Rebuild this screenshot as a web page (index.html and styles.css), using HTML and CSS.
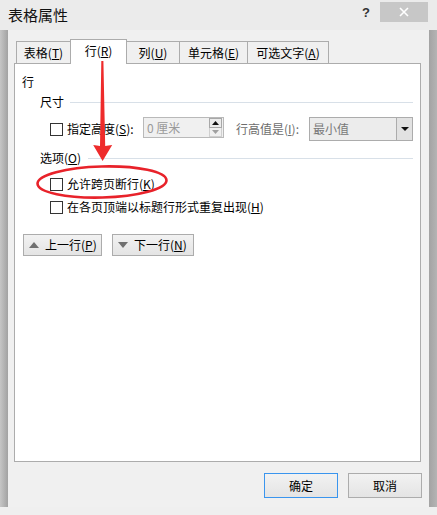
FILE: index.html
```html
<!DOCTYPE html>
<html>
<head>
<meta charset="utf-8">
<link rel="stylesheet" href="styles.css">
</head>
<body>
<div class="titlebar">
  <div class="title">表格属性</div>
  <div class="help">?</div>
  <div class="close"><svg width="12" height="12" viewBox="0 0 12 12"><path d="M2 2L10 10M10 2L2 10" stroke="#fff" stroke-width="1.6"/></svg></div>
</div>
<div class="main">
  <div class="strip-left"></div>
  <div class="dialog">
    <div class="tabs">
      <div class="tab w1">表格(<u>T</u>)</div>
      <div class="tab active w2">行(<u>R</u>)</div>
      <div class="tab w3">列(<u>U</u>)</div>
      <div class="tab w4">单元格(<u>E</u>)</div>
      <div class="tab w5">可选文字(<u>A</u>)</div>
    </div>
    <div class="panel">
      <div class="heading">行</div>
      <div class="group-title"><span>尺寸</span><div class="rule"></div></div>
      <div class="size-row">
        <span class="cb"></span>
        <span class="lbl1">指定高度(<u>S</u>):</span>
        <div class="spin">
          <span class="spin-text">0 厘米</span>
          <div class="spin-btns">
            <div class="sb up"><svg width="7" height="4" viewBox="0 0 7 4"><path d="M0 4L3.5 0L7 4Z" fill="#111"/></svg></div>
            <div class="sb down"><svg width="7" height="4" viewBox="0 0 7 4"><path d="M0 0L3.5 4L7 0Z" fill="#a0a0a0"/></svg></div>
          </div>
        </div>
        <span class="lbl2">行高值是(<u>I</u>):</span>
        <div class="combo">
          <span class="combo-text">最小值</span>
          <div class="drop"><svg width="8" height="4" viewBox="0 0 8 4"><path d="M0 0L4 4L8 0Z" fill="#111"/></svg></div>
        </div>
      </div>
      <div class="group-title opts"><span>选项(<u>O</u>)</span><div class="rule"></div></div>
      <div class="check-row first"><span class="cb"></span><span>允许跨页断行(<u>K</u>)</span></div>
      <div class="check-row second"><span class="cb"></span><span>在各页顶端以标题行形式重复出现(<u>H</u>)</span></div>
      <div class="nav-row">
        <div class="btn nav prev"><svg width="10" height="6" viewBox="0 0 10 6"><path d="M0 6L5 0L10 6Z" fill="#707070"/></svg><span>上一行(<u>P</u>)</span></div>
        <div class="btn nav next"><svg width="10" height="6" viewBox="0 0 10 6"><path d="M0 0L5 6L10 0Z" fill="#707070"/></svg><span>下一行(<u>N</u>)</span></div>
      </div>
    </div>
    <div class="footer">
      <div class="btn foot ok">确定</div>
      <div class="btn foot">取消</div>
    </div>
  </div>
  <div class="strip-right"></div>
</div>
<div class="bottom"></div>
<svg class="annot" width="437" height="515" viewBox="0 0 437 515">
  <path d="M101.3 61 L103.4 61 L105.2 146 Q108 145.5 112.2 145 L102.6 161 L93.2 145 Q97 145.5 100 146 Z" fill="#ee2b2b"/>
  <ellipse cx="102" cy="182" rx="64.5" ry="15.5" fill="none" stroke="#e8222a" stroke-width="2.6" transform="rotate(-1.5 102 182)"/>
</svg>
</body>
</html>
```
FILE: styles.css
```css
* { box-sizing: border-box; }
html, body { margin: 0; padding: 0; }
body {
  width: 437px;
  height: 515px;
  overflow: hidden;
  position: relative;
  background: #efefef;
  font-family: "Noto Sans CJK SC", "Noto Sans", sans-serif;
  font-size: 12px;
  line-height: 16px;
  color: #000;
}
u { text-decoration: underline; text-underline-offset: 1px; }

.titlebar {
  height: 30px;
  display: flex;
  align-items: center;
  background: #ebebeb;
}
.title {
  padding-left: 8px;
  font-size: 15px;
  line-height: 20px;
  color: #111;
}
.help {
  margin-left: auto;
  margin-right: 10px;
  font-family: "Liberation Sans", sans-serif;
  font-weight: bold;
  font-size: 13px;
  color: #333;
  margin-top: -4px;
}
.close {
  align-self: flex-start;
  margin-top: 2px;
  margin-right: 9px;
  width: 48px;
  height: 20px;
  background: #c7c7c7;
  display: flex;
  align-items: center;
  justify-content: center;
}

.main {
  display: flex;
  height: 477px;
}
.strip-left {
  width: 8px;
  background: linear-gradient(to right, #c6c6c6, #a2a2a2);
}
.strip-right {
  width: 8px;
  background: linear-gradient(to right, #a3a3a3, #b4b4b4);
}
.bottom {
  height: 8px;
  background: #efefef;
}

.dialog {
  width: 421px;
  background: #f0f0f0;
  padding: 9px 8px 0 6px;
  display: flex;
  flex-direction: column;
}

.tabs {
  height: 24px;
  display: flex;
  align-items: flex-end;
  padding-left: 2px;
}
.tab {
  height: 22px;
  border: 1px solid #acacac;
  border-bottom: none;
  background: #f0f0f0;
  display: flex;
  align-items: center;
  justify-content: center;
  margin-left: -1px;
}
.tab:first-child { margin-left: 0; }
.tab.active {
  height: 25px;
  margin-bottom: -1px;
  background: #fff;
  position: relative;
  z-index: 2;
  padding-bottom: 2px;
}
.w1 { width: 55px; }
.w2 { width: 57px; }
.w3 { width: 54px; }
.w4 { width: 69px; }
.w5 { width: 82px; }

.panel {
  height: 399px;
  background: #fff;
  border: 1px solid #acacac;
  padding: 10px 7px 0 7px;
  display: flex;
  flex-direction: column;
}
.heading { height: 16px; }

.group-title {
  margin-top: 4px;
  margin-left: 18px;
  height: 16px;
  display: flex;
  align-items: center;
}
.group-title .rule {
  flex: 1;
  height: 1px;
  background: #d8e0e8;
  margin-left: 6px;
}
.group-title.opts { margin-top: 9px; }
.group-title.opts .rule { margin-left: 7px; }

.cb {
  width: 13px;
  height: 13px;
  border: 1px solid #333;
  background: #fff;
  flex: none;
}

.size-row {
  margin-top: 7px;
  margin-left: 28px;
  height: 24px;
  display: flex;
  align-items: flex-start;
}
.size-row .cb { margin-top: 6px; }
.lbl1 {
  margin-left: 4px;
  width: 76px;
  margin-top: 4px;
}
.spin {
  width: 81px;
  height: 21px;
  border: 1px solid #b9b9b9;
  background: #f0f0f0;
  display: flex;
  align-items: center;
}
.spin-text {
  color: #9a9a9a;
  padding-left: 3px;
}
.spin-btns {
  margin-left: auto;
  margin-right: 1px;
  width: 13px;
  height: 19px;
  display: flex;
  flex-direction: column;
}
.sb {
  flex: 1;
  display: flex;
  align-items: center;
  justify-content: center;
  border: 1px solid #cfcfcf;
  background: #f0f0f0;
}
.sb.up { border-color: #a8a8a8; background: #ececec; }
.sb.down { border-top: none; }
.lbl2 {
  margin-left: 12px;
  width: 73px;
  margin-top: 4px;
  color: #6d6d6d;
}
.combo {
  width: 104px;
  height: 24px;
  border: 1px solid #acacac;
  background: #ececec;
  display: flex;
  align-items: center;
}
.combo-text {
  color: #787878;
  padding-left: 3px;
}
.drop {
  margin-left: auto;
  width: 16px;
  height: 22px;
  border-left: 1px solid #acacac;
  background: #e2e2e2;
  display: flex;
  align-items: center;
  justify-content: center;
}

.check-row {
  margin-left: 28px;
  height: 16px;
  display: flex;
  align-items: center;
}
.check-row .cb { margin-right: 4px; }
.check-row.first { margin-top: 10px; }
.check-row.second { margin-top: 7px; }

.nav-row {
  margin-top: 19px;
  margin-left: 1px;
  display: flex;
  gap: 10px;
}

.btn {
  border: 1px solid #acacac;
  background: linear-gradient(#f2f2f2, #e4e4e4);
  display: flex;
  align-items: center;
}
.nav {
  height: 22px;
  padding-left: 5px;
}
.nav svg { margin-right: 6px; }
.prev { width: 79px; }
.next { width: 82px; }

.footer {
  margin-top: 11px;
  margin-right: -1px;
  display: flex;
  justify-content: flex-end;
  gap: 10px;
}
.foot {
  width: 74px;
  height: 25px;
  justify-content: center;
}
.foot.ok { border-color: #3a95ee; }

.annot {
  position: absolute;
  left: 0;
  top: 0;
  pointer-events: none;
  z-index: 5;
}
```
